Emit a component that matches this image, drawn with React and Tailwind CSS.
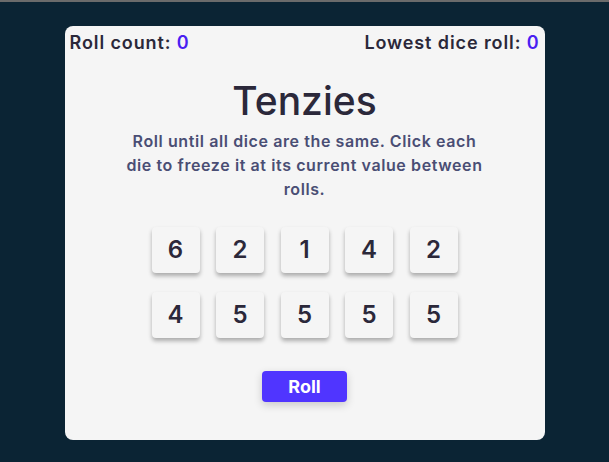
import React from 'react';

const dice = [6, 2, 1, 4, 2, 4, 5, 5, 5, 5];

export default function App() {
  return (
    <div className="min-h-screen bg-[#0b2434] border-t-2 border-[#6b6b6b] pt-6" style={{ fontFamily: 'Inter, "Noto Sans", sans-serif' }}>
      <main className="mx-auto w-[480px] h-[414px] bg-[#f5f5f5] rounded-lg flex flex-col items-center px-[5px]">
        <div className="w-full flex justify-between pt-[5px] text-[18px] font-semibold text-[#2b283a] leading-6 tracking-[0.9px]">
          <span>Roll count: <span className="text-[#4a1ff2]">0</span></span>
          <span>Lowest dice roll: <span className="text-[#4a1ff2]">0</span></span>
        </div>
        <h1 className="mt-[22px] text-[39px] font-medium text-[#2b283a] leading-[48px]">Tenzies</h1>
        <p className="mt-[4px] w-[358px] text-center text-[16px] font-semibold text-[#4a4e74] leading-6 tracking-[0.6px]">
          Roll until all dice are the same. Click each die to freeze it at its current value between rolls.
        </p>
        <div className="mt-[26px] grid grid-cols-5 gap-x-[16.5px] gap-y-[19px]">
          {dice.map((d, i) => (
            <div key={i} className="w-12 h-[46px] bg-[#f5f5f5] rounded-[4px] shadow-[0_3px_4px_rgba(0,0,0,0.3)] flex items-center justify-center text-[24px] font-semibold text-[#2b283a]">
              {d}
            </div>
          ))}
        </div>
        <button className="mt-[33px] w-[85px] h-[31px] bg-[#5035ff] text-white rounded-[4px] text-[18px] font-bold shadow-[0_3px_8px_rgba(0,0,0,0.18)]">
          Roll
        </button>
      </main>
    </div>
  );
}
